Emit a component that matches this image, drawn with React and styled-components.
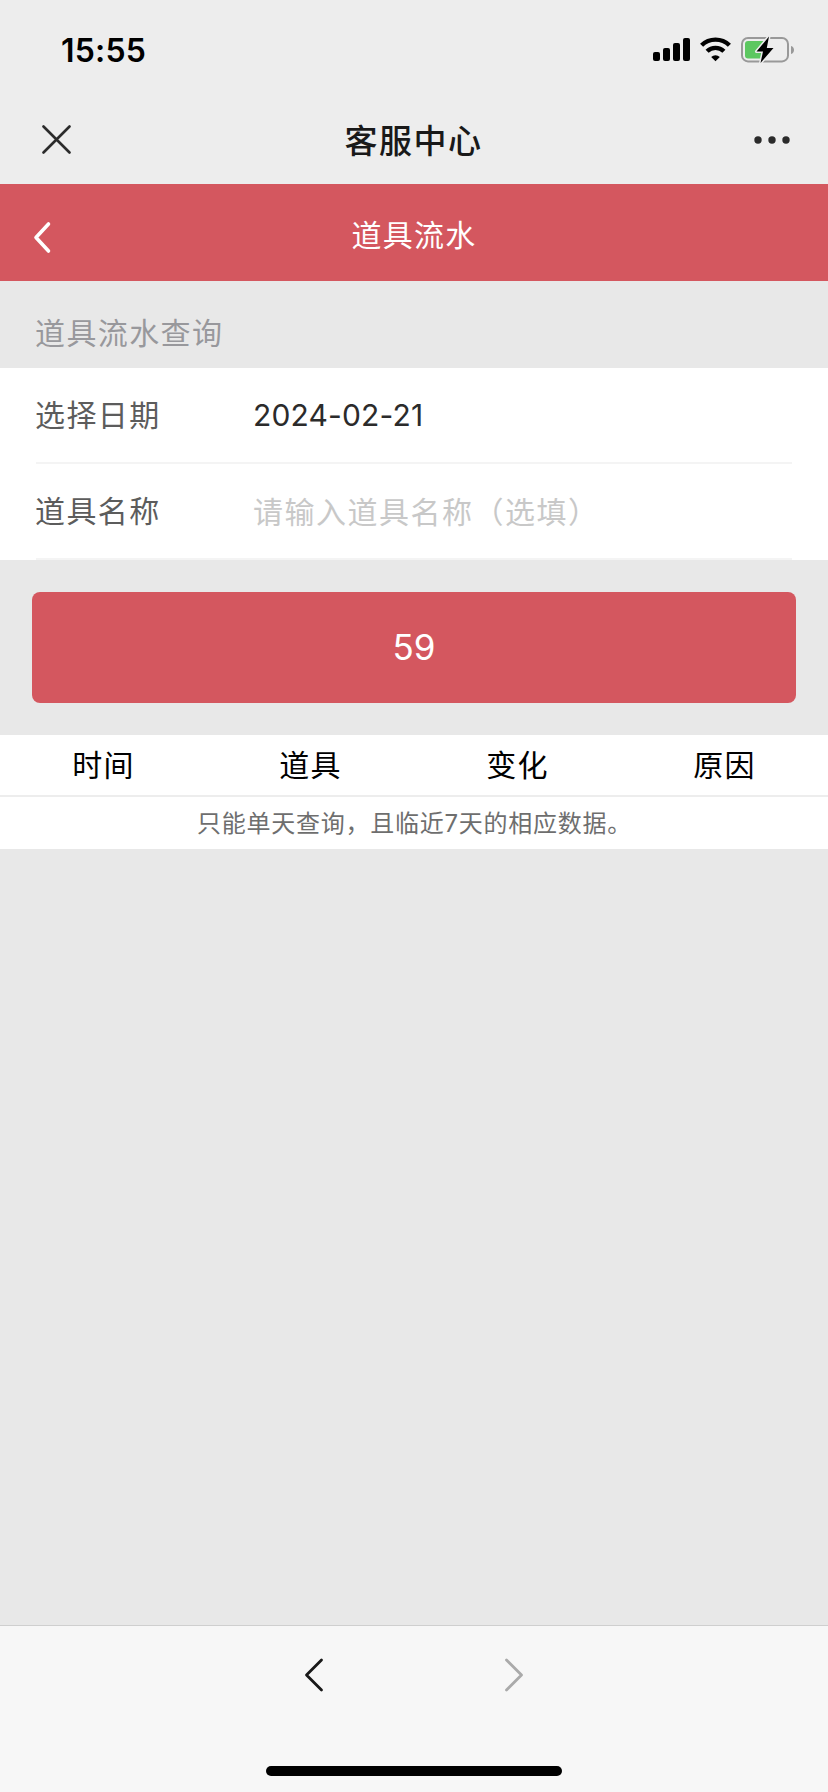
import React from "react";
import styled, { createGlobalStyle } from "styled-components";

const GlobalStyle = createGlobalStyle`
  * {
    box-sizing: border-box;
  }
  body {
    margin: 0;
    background: #e8e8e8;
    font-family: Inter, "Noto Sans CJK SC", sans-serif;
  }
`;

const Page = styled.div`
  display: flex;
  flex-direction: column;
  width: 828px;
  height: 1792px;
  background: #e8e8e8;
`;

const StatusBar = styled.div`
  display: flex;
  align-items: center;
  justify-content: space-between;
  height: 96px;
  padding: 4px 33px 0 61px;
  background: #ededed;
`;

const Time = styled.span`
  padding-top: 2px;
  color: #000;
  font-size: 32px;
  font-weight: 600;
  line-height: 40px;
  letter-spacing: 0.2px;
`;

const TitleBar = styled.div`
  display: grid;
  grid-template-columns: 200px 1fr 200px;
  align-items: center;
  height: 88px;
  padding: 0 38px 1px 42px;
  background: #ededed;
  svg:last-child {
    justify-self: end;
  }
`;

const Title = styled.h1`
  margin: 0;
  padding: 2px 5px 0 0;
  color: #191919;
  font-size: 33px;
  font-weight: 500;
  line-height: 48px;
  letter-spacing: 1.5px;
  text-align: center;
`;

const Header = styled.header`
  display: grid;
  grid-template-columns: 60px 1fr 60px;
  align-items: center;
  height: 97px;
  padding: 0 32px;
  background: #d4575f;
`;

const HeaderTitle = styled.h2`
  margin: 0;
  padding-top: 5px;
  color: #fff;
  font-size: 30px;
  font-weight: 400;
  line-height: 44px;
  letter-spacing: 1.3px;
  text-align: center;
`;

const SectionLabel = styled.div`
  height: 87px;
  padding: 30px 35px 0;
  color: #98989c;
  font-size: 30px;
  font-weight: 400;
  line-height: 44px;
  letter-spacing: 1.4px;
`;

const Form = styled.div`
  height: 192px;
  padding: 0 36px;
  background: #fff;
`;

const Row = styled.div`
  display: flex;
  align-items: center;
  height: 96px;
  border-bottom: 2px solid #f4f4f4;
  font-size: 30px;
  line-height: 44px;
`;

const Label = styled.label`
  width: 218px;
  margin-left: -1px;
  color: #5c5c5c;
  font-weight: 400;
  letter-spacing: 1.4px;
`;

const Value = styled.span`
  color: #2b2b2b;
  font-weight: 400;
  letter-spacing: 0.15px;
`;

const Placeholder = styled.span`
  padding-top: 2px;
  color: #c8c8c8;
  font-weight: 400;
  letter-spacing: 1.5px;
`;

const SubmitButton = styled.button`
  height: 111px;
  margin: 32px;
  padding: 0 0 2px;
  border: 0;
  border-radius: 8px;
  background: #d4575f;
  color: #fff;
  font-family: inherit;
  font-size: 35px;
  font-weight: 400;
`;

const TableHead = styled.div`
  display: grid;
  grid-template-columns: repeat(4, 207px);
  height: 62px;
  border-bottom: 2px solid #ededed;
  background: #fff;
`;

const HeadCell = styled.div`
  color: #000;
  font-size: 30px;
  font-weight: 400;
  line-height: 60px;
  letter-spacing: 1.3px;
  text-align: center;
`;

const Note = styled.p`
  height: 52px;
  margin: 0;
  padding: 1px 0 0 1px;
  background: #fff;
  color: #6e6e6e;
  font-size: 24px;
  font-weight: 400;
  line-height: 52px;
  letter-spacing: 0.75px;
  text-align: center;
`;

const BottomBar = styled.footer`
  display: flex;
  flex-direction: column;
  align-items: center;
  justify-content: space-between;
  height: 167px;
  margin-top: auto;
  padding: 31px 0 16px;
  border-top: 1px solid #cfcfcf;
  background: #f7f7f7;
`;

const NavButtons = styled.div`
  display: flex;
  gap: 180px;
`;

const HomeIndicator = styled.div`
  width: 296px;
  height: 10px;
  border-radius: 5px;
  background: #000;
`;

const StatusIcons = () => (
  <svg width="142" height="28" viewBox="653 36 142 28" fill="none">
    <g fill="#000">
      <rect x="653" y="52" width="7" height="9" rx="2" />
      <rect x="663" y="48" width="7" height="13" rx="2" />
      <rect x="673" y="43" width="7" height="18" rx="2" />
      <rect x="683" y="38" width="7" height="23" rx="2" />
      <path d="M711.2 57.1a6.2 6.2 0 0 1 8.6 0L715.5 61.2z" />
    </g>
    <path
      d="M701.6 45.3a19.8 19.8 0 0 1 27.8 0M707.1 51.3a12 12 0 0 1 16.8 0"
      stroke="#000"
      strokeWidth="4.4"
    />
    <rect x="742" y="38" width="46" height="23.4" rx="6" stroke="#999" strokeWidth="2" />
    <rect x="745" y="41" width="21" height="17.5" rx="3" fill="#5cc760" />
    <path d="M791 46c4 1 4 7 0 8z" fill="#999" />
    <path
      d="M769 36.5L756.5 51.5h6.5L760.5 63L773.5 48h-6.7z"
      fill="#000"
      stroke="#ededed"
      strokeWidth="3"
      paintOrder="stroke"
      strokeLinejoin="round"
    />
  </svg>
);

const CloseIcon = () => (
  <svg width="29" height="29" viewBox="0 0 29 29">
    <path
      d="M1.5 1.5l26 26M27.5 1.5l-26 26"
      stroke="#2b2b2b"
      strokeWidth="2.6"
      strokeLinecap="round"
    />
  </svg>
);

const MoreIcon = () => (
  <svg width="36" height="8" viewBox="0 0 36 8" fill="#2b2b2b">
    <circle cx="4" cy="4" r="3.7" />
    <circle cx="18" cy="4" r="3.7" />
    <circle cx="32" cy="4" r="3.7" />
  </svg>
);

const HeaderBack = styled.svg`
  margin-top: 11px;
`;

const Chevron = ({ color, flip }) => (
  <svg width="20" height="36" viewBox="0 0 20 36" fill="none">
    <path
      d={flip ? "M2.5 3L17.5 18L2.5 33" : "M17.5 3L2.5 18L17.5 33"}
      stroke={color}
      strokeWidth="2.8"
      strokeLinecap="round"
      strokeLinejoin="round"
    />
  </svg>
);

const columns = ["时间", "道具", "变化", "原因"];

const App = () => {
  return (
    <Page>
      <GlobalStyle />
      <StatusBar>
        <Time>15:55</Time>
        <StatusIcons />
      </StatusBar>
      <TitleBar>
        <CloseIcon />
        <Title>客服中心</Title>
        <MoreIcon />
      </TitleBar>
      <Header>
        <HeaderBack width="20" height="34" viewBox="0 0 20 34" fill="none">
          <path
            d="M16.5 3L4 16.5L16.5 30"
            stroke="#fff"
            strokeWidth="3.6"
            strokeLinecap="round"
            strokeLinejoin="round"
          />
        </HeaderBack>
        <HeaderTitle>道具流水</HeaderTitle>
      </Header>
      <SectionLabel>道具流水查询</SectionLabel>
      <Form>
        <Row>
          <Label>选择日期</Label>
          <Value>2024-02-21</Value>
        </Row>
        <Row>
          <Label>道具名称</Label>
          <Placeholder>请输入道具名称（选填）</Placeholder>
        </Row>
      </Form>
      <SubmitButton>59</SubmitButton>
      <TableHead>
        {columns.map((name) => (
          <HeadCell key={name}>{name}</HeadCell>
        ))}
      </TableHead>
      <Note>只能单天查询，且临近7天的相应数据。</Note>
      <BottomBar>
        <NavButtons>
          <Chevron color="#191919" />
          <Chevron color="#aaaaaa" flip />
        </NavButtons>
        <HomeIndicator />
      </BottomBar>
    </Page>
  );
};

export default App;
